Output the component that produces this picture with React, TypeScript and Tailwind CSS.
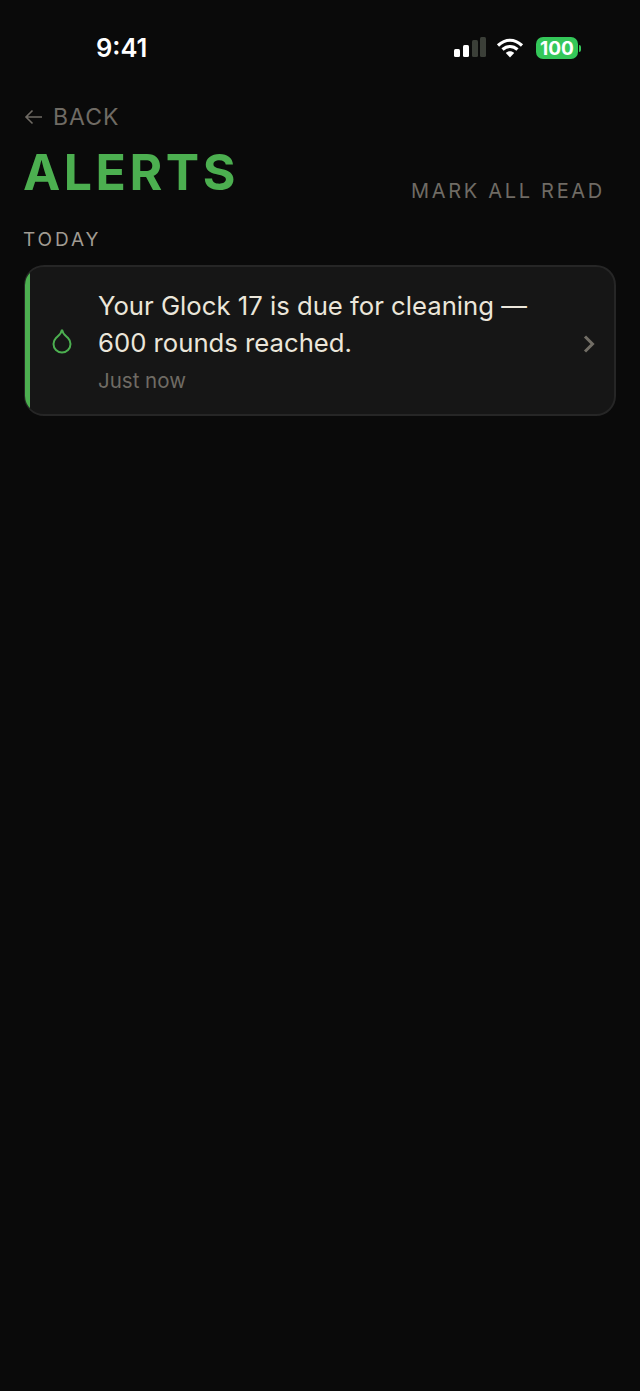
export default function App() {
  return (
    <div className="min-h-[1391px] bg-[#0a0a0a] font-['Inter',sans-serif]">
      {/* Status bar */}
      <div className="flex h-[96px] items-center justify-between pl-[96px] pr-[59px]">
        <span className="text-[25.5px] font-semibold leading-none text-white">9:41</span>
        <div className="flex items-center">
          <svg className="mb-[2px] mr-[10px]" width="32" height="20" viewBox="0 0 32 20">
            <rect x="0" y="12" width="6" height="8" rx="1.5" fill="#fff" />
            <rect x="9" y="8" width="6" height="12" rx="1.5" fill="#fff" />
            <rect x="18" y="3" width="6" height="17" rx="1.5" fill="#3b3f38" />
            <rect x="26" y="0" width="6" height="20" rx="1.5" fill="#3b3f38" />
          </svg>
          <svg className="mr-[12px]" width="28" height="20" viewBox="0 0 28 20" fill="none" stroke="#fff" strokeWidth="3.2">
            <path d="M2 7.500C9.500 .5 18.500 .5 26 7.500" />
            <path d="M6.500 11.500C11 7.500 17 7.500 21.500 11.500" />
            <path d="M14 19.500 L9.800 15 C12 12.800 16 12.800 18.200 15 Z" fill="#fff" stroke="none" />
          </svg>
          <div className="flex items-center gap-[1px]">
            <div className="flex h-[22px] w-[42px] items-center justify-center rounded-[7px] bg-[#34c759] text-[19px] font-bold leading-none text-white">
              100
            </div>
            <div className="h-[7px] w-[2px] rounded-r-full bg-[#34c759]" />
          </div>
        </div>
      </div>

      <div className="px-[24px] pt-[8px]">
        <div className="flex items-center gap-[9px] text-[#6f6b64]">
          <svg width="20" height="16" viewBox="0 0 20 16" fill="none" stroke="currentColor" strokeWidth="1.600">
            <path d="M18 8H2M8.500 1.500L2 8l6.500 6.500" />
          </svg>
          <span className="text-[23px] leading-[26px] tracking-[1px]">BACK</span>
        </div>

        <div className="mt-[13px] flex items-end justify-between pr-[11px]">
          <h1 className="mb-[2px] -ml-[1px] text-[50px] font-bold leading-[58px] tracking-[3.500px] text-[#4caf50]">ALERTS</h1>
          <span className="text-[20px] leading-[24px] tracking-[2.700px] text-[#6f6b64]">MARK ALL READ</span>
        </div>

        <div className="-ml-[1px] mt-[26px] text-[19px] leading-[22px] tracking-[2.900px] text-[#a09b92]">TODAY</div>

        <div className="mt-[14px] flex h-[151px] items-stretch overflow-hidden rounded-[20px] border-2 border-l border-[#262626] bg-[#161616]">
          <div className="w-[5px] shrink-0 bg-[#4caf50]" />
          <div className="flex flex-1 items-center">
            <svg className="ml-[22px] shrink-0" width="20" height="26" viewBox="0 0 20 26" fill="none" stroke="#4caf50" strokeWidth="2">
              <path d="M10 1.500C10.500 6 14 8 16 10A8.500 8.500 0 1 1 4 10C6 8 9.500 6 10 1.500Z" />
            </svg>
            <div className="ml-[26px] flex-1 pb-[1px]">
              <div className="text-[25.700px] leading-[37px] text-[#ebe6da]">
                Your Glock 17 is due for cleaning —<br />600 rounds reached.
              </div>
              <div className="mt-[8px] text-[20.500px] leading-[24px] text-[#6f6b64]">Just now</div>
            </div>
            <svg className="mr-[19px] mt-[6px] shrink-0" width="12" height="18" viewBox="0 0 12 18" fill="none" stroke="#716d65" strokeWidth="3">
              <path d="M2 1.500L9.500 9 2 16.500" />
            </svg>
          </div>
        </div>
      </div>
    </div>
  );
}
